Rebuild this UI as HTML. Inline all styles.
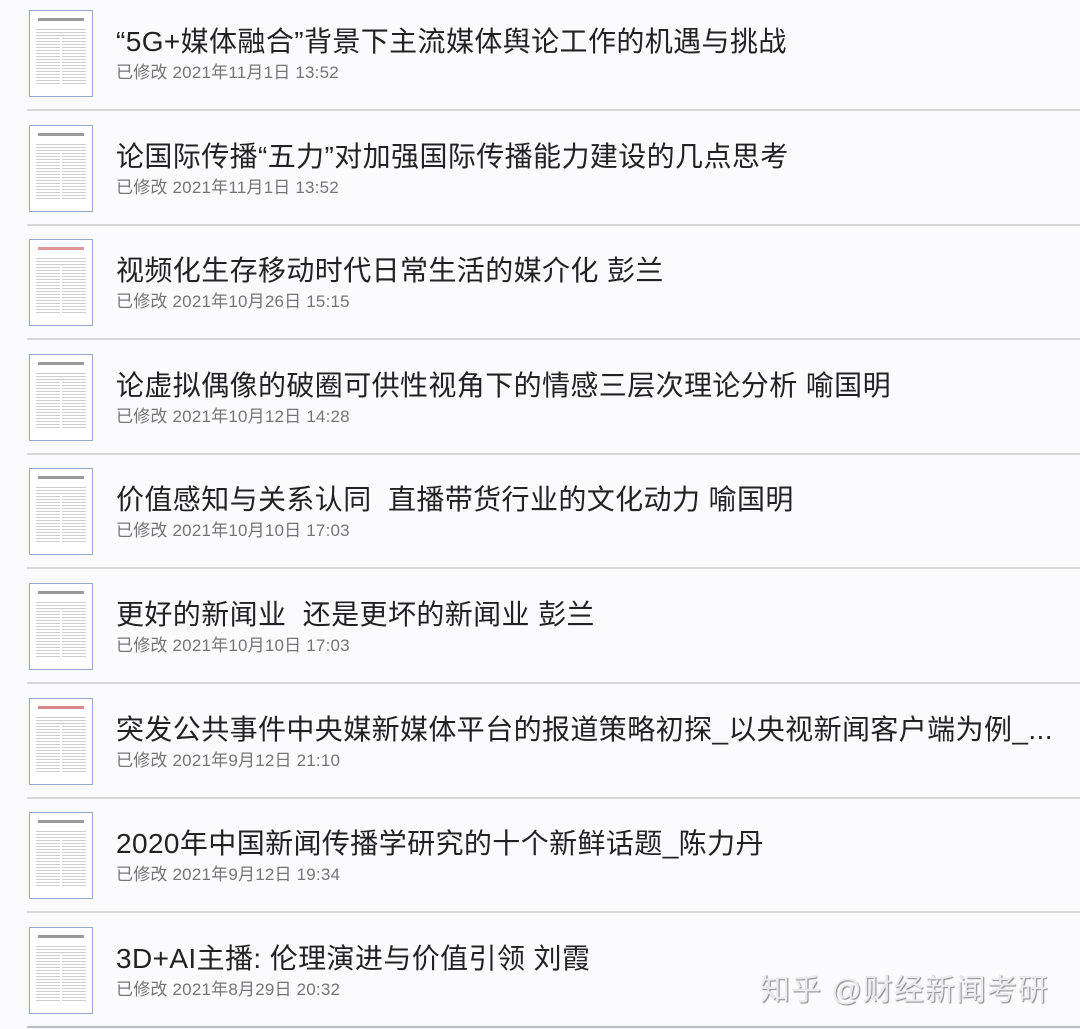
<!DOCTYPE html>
<html><head><meta charset="utf-8"><style>
body{margin:0;width:1080px;height:1029px;background:#fbfbfd;overflow:hidden;position:relative;font-family:"Liberation Sans","Noto Sans CJK SC",sans-serif}
.row{position:absolute;left:0;width:1080px;height:114px}
.sep{position:absolute;left:27px;right:0;bottom:0;height:2px;background:#d6d7db}
.th{position:absolute;left:29px;top:13px;width:62px;height:85px;border:1.5px solid #93a8cc;background:#fff}
.th .h{position:absolute;left:8px;right:8px;top:7px;height:3px;background:#9a9a9a}
.th .b{position:absolute;left:6px;right:6px;top:16px;bottom:10px;background:repeating-linear-gradient(#fff 0 2px,#c9c9c9 2px 3px);opacity:.9}
.th .c{position:absolute;left:30px;width:2px;top:26px;bottom:10px;background:#fff}
.t{position:absolute;left:116px;top:29px;font-size:28px;line-height:32px;letter-spacing:0.4px;color:#222;white-space:nowrap}
.d{position:absolute;left:116px;top:65px;font-size:17px;line-height:21px;letter-spacing:0.2px;color:#757575;white-space:nowrap}
.wm{position:absolute;left:760px;top:965px;font-size:30px;color:#eaeaec;text-shadow:1px 1px 1px #888;letter-spacing:1px}
</style></head><body>
<div class="row" style="top:-3px"><div class="th"><div class="h"></div><div class="b"></div><div class="c"></div></div><div class="t">“5G+媒体融合”背景下主流媒体舆论工作的机遇与挑战</div><div class="d">已修改 2021年11月1日 13:52</div><div class="sep"></div></div>
<div class="row" style="top:112px"><div class="th"><div class="h"></div><div class="b"></div><div class="c"></div></div><div class="t">论国际传播“五力”对加强国际传播能力建设的几点思考</div><div class="d">已修改 2021年11月1日 13:52</div><div class="sep"></div></div>
<div class="row" style="top:226px"><div class="th"><div class="h" style="background:#d99"></div><div class="b"></div><div class="c"></div></div><div class="t">视频化生存移动时代日常生活的媒介化 彭兰</div><div class="d">已修改 2021年10月26日 15:15</div><div class="sep"></div></div>
<div class="row" style="top:341px"><div class="th"><div class="h"></div><div class="b"></div><div class="c"></div></div><div class="t">论虚拟偶像的破圈可供性视角下的情感三层次理论分析 喻国明</div><div class="d">已修改 2021年10月12日 14:28</div><div class="sep"></div></div>
<div class="row" style="top:455px"><div class="th"><div class="h"></div><div class="b"></div><div class="c"></div></div><div class="t">价值感知与关系认同&nbsp; 直播带货行业的文化动力 喻国明</div><div class="d">已修改 2021年10月10日 17:03</div><div class="sep"></div></div>
<div class="row" style="top:570px"><div class="th"><div class="h"></div><div class="b"></div><div class="c"></div></div><div class="t">更好的新闻业&nbsp; 还是更坏的新闻业 彭兰</div><div class="d">已修改 2021年10月10日 17:03</div><div class="sep"></div></div>
<div class="row" style="top:685px"><div class="th"><div class="h" style="background:#d88"></div><div class="b"></div><div class="c"></div></div><div class="t">突发公共事件中央媒新媒体平台的报道策略初探_以央视新闻客户端为例_...</div><div class="d">已修改 2021年9月12日 21:10</div><div class="sep"></div></div>
<div class="row" style="top:799px"><div class="th"><div class="h"></div><div class="b"></div><div class="c"></div></div><div class="t">2020年中国新闻传播学研究的十个新鲜话题_陈力丹</div><div class="d">已修改 2021年9月12日 19:34</div><div class="sep"></div></div>
<div class="row" style="top:914px"><div class="th"><div class="h"></div><div class="b"></div><div class="c"></div></div><div class="t">3D+AI主播: 伦理演进与价值引领 刘霞</div><div class="d">已修改 2021年8月29日 20:32</div><div class="sep" style="background:#b8bcc4"></div></div>
<div class="wm">知乎 @财经新闻考研</div>
</body></html>
